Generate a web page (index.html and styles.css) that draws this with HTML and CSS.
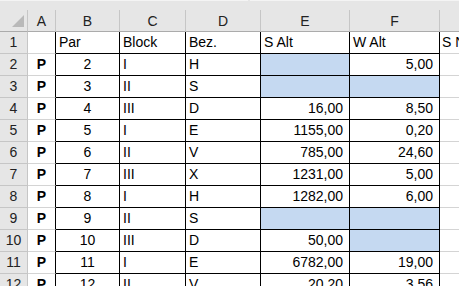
FILE: index.html
```html
<!DOCTYPE html>
<html lang="de">
<head>
<meta charset="utf-8">
<title>Tabelle</title>
<link rel="stylesheet" href="styles.css">
</head>
<body>
<div class="sheet">
  <div class="strip"><span class="strip-a"></span><span class="strip-b"></span></div>
  <div class="grid">
    <div class="corner"><svg class="tri" width="12" height="12" viewBox="0 0 12 12"><polygon points="12,0 12,12 0,12" fill="#b9b9b9"/></svg></div>
    <div class="ch">A</div><div class="ch">B</div><div class="ch">C</div><div class="ch">D</div><div class="ch">E</div><div class="ch">F</div><div class="ch last"></div>

    <div class="rh">1</div><div class="a"></div><div class="c">Par</div><div class="c">Block</div><div class="c">Bez.</div><div class="c">S Alt</div><div class="c">W Alt</div><div class="g">S NA</div>

    <div class="rh">2</div><div class="a">P</div><div class="c ctr">2</div><div class="c">I</div><div class="c">H</div><div class="c blue"></div><div class="c num">5,00</div><div class="g"></div>

    <div class="rh">3</div><div class="a">P</div><div class="c ctr">3</div><div class="c">II</div><div class="c">S</div><div class="c blue"></div><div class="c blue"></div><div class="g"></div>

    <div class="rh">4</div><div class="a">P</div><div class="c ctr">4</div><div class="c">III</div><div class="c">D</div><div class="c num">16,00</div><div class="c num">8,50</div><div class="g"></div>

    <div class="rh">5</div><div class="a">P</div><div class="c ctr">5</div><div class="c">I</div><div class="c">E</div><div class="c num">1155,00</div><div class="c num">0,20</div><div class="g"></div>

    <div class="rh">6</div><div class="a">P</div><div class="c ctr">6</div><div class="c">II</div><div class="c">V</div><div class="c num">785,00</div><div class="c num">24,60</div><div class="g"></div>

    <div class="rh">7</div><div class="a">P</div><div class="c ctr">7</div><div class="c">III</div><div class="c">X</div><div class="c num">1231,00</div><div class="c num">5,00</div><div class="g"></div>

    <div class="rh">8</div><div class="a">P</div><div class="c ctr">8</div><div class="c">I</div><div class="c">H</div><div class="c num">1282,00</div><div class="c num">6,00</div><div class="g"></div>

    <div class="rh">9</div><div class="a">P</div><div class="c ctr">9</div><div class="c">II</div><div class="c">S</div><div class="c blue"></div><div class="c blue"></div><div class="g"></div>

    <div class="rh">10</div><div class="a">P</div><div class="c ctr">10</div><div class="c">III</div><div class="c">D</div><div class="c num">50,00</div><div class="c blue"></div><div class="g"></div>

    <div class="rh">11</div><div class="a">P</div><div class="c ctr">11</div><div class="c">I</div><div class="c">E</div><div class="c num">6782,00</div><div class="c num">19,00</div><div class="g"></div>

    <div class="rh">12</div><div class="a">P</div><div class="c ctr">12</div><div class="c">II</div><div class="c">V</div><div class="c num">20,20</div><div class="c num">3,56</div><div class="g"></div>
  </div>
</div>
</body>
</html>
```

FILE: styles.css
```css
* { box-sizing: border-box; }
html, body { margin: 0; padding: 0; background: #fff; }
body { width: 459px; height: 286px; overflow: hidden; font-family: "Liberation Sans", Arial, sans-serif; }
.sheet { width: 459px; height: 286px; overflow: hidden; background: #fff; }
.strip { height: 10px; background: #e6e6e6; display: flex; }
.strip-a { width: 248px; height: 1px; background: #f4f4f4; }
.strip-b { flex: 1; height: 1px; background: #f4f4f4; margin-left: 2px; }
.grid {
  display: grid;
  grid-template-columns: 28px 28px 64px 66px 75px 89px 90px 60px;
  grid-auto-rows: 22px;
  width: 508px;
}
.grid > div {
  border-right: 1px solid #000;
  border-bottom: 1px solid #000;
  font-size: 14px;
  line-height: 21px;
  white-space: nowrap;
  overflow: hidden;
  color: #000;
}
.grid > .corner {
  background: #e6e6e6;
  border-right: 1px solid #c6c6c6;
  border-bottom: 1px solid #ababab;
  display: flex;
  align-items: flex-end;
  justify-content: flex-end;
  padding: 0 3px 4px 0;
}
.tri { display: block; }
.grid > .ch {
  background: #e6e6e6;
  border-right: 1px solid #c6c6c6;
  border-bottom: 1px solid #ababab;
  text-align: center;
  color: #222;
  padding-top: 1px;
  font-size: 14px;
}
.grid > .ch.last { border-right: none; }
.grid > .rh {
  background: #e6e6e6;
  border-right: 1px solid #c6c6c6;
  border-bottom: 1px solid #c6c6c6;
  text-align: center;
  color: #222;
}
.grid > .a {
  border-bottom: 1px solid #d4d4d4;
  text-align: center;
  font-weight: bold;
}
.grid > .c { padding-left: 3px; }
.grid > .c.ctr { text-align: center; padding-left: 0; }
.grid > .c.num { text-align: right; padding-right: 6px; padding-left: 0; }
.grid > .blue { background: #c5d9f1; }
.grid > .g {
  border-right: 1px solid #d4d4d4;
  border-bottom: 1px solid #d4d4d4;
  padding-left: 2px;
}
```
